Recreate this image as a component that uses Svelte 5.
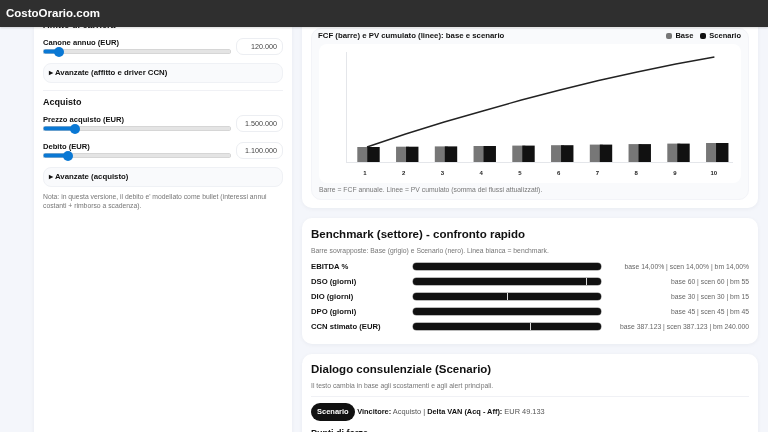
<script>
	let leftSliders = [{ label: 'Canone annuo (EUR)', pct: 6.4, value: '120.000' }];
	let buySliders = [
		{ label: 'Prezzo acquisto (EUR)', pct: 15.4, value: '1.500.000' },
		{ label: 'Debito (EUR)', pct: 11.5, value: '1.100.000' }
	];

	let base = [15, 15.3, 15.6, 16, 16.4, 16.8, 17.4, 17.9, 18.4, 19];
	let pv = [103, 90, 78, 67, 56, 46, 36.5, 28, 20, 13];

	const slot = 38.75;
	$: linePoints = pv.map((y, i) => `${48 + i * 38.6},${y}`).join(' ');

	let benchmark = [
		{ label: 'EBITDA %', mark: null, text: 'base 14,00% | scen 14,00% | bm 14,00%' },
		{ label: 'DSO (giorni)', mark: 92, text: 'base 60 | scen 60 | bm 55' },
		{ label: 'DIO (giorni)', mark: 50, text: 'base 30 | scen 30 | bm 15' },
		{ label: 'DPO (giorni)', mark: null, text: 'base 45 | scen 45 | bm 45' },
		{ label: 'CCN stimato (EUR)', mark: 62, text: 'base 387.123 | scen 387.123 | bm 240.000' }
	];

	function fill(pct) {
		return `background-size:${4 + pct * 1.72}px 100%`;
	}
</script>

<div class="page">
	<header class="topbar">CostoOrario.com</header>

	<div class="layout">
		<aside class="card side">
			<h3 class="cutTitle">Affitto di carriera</h3>
			{#each leftSliders as s}
				<div class="field">
					<div class="fieldMain">
						<label>{s.label}</label>
						<input type="range" min="0" max="100" step="0.1" value={s.pct} style={fill(s.pct)} />
					</div>
					<input class="num" type="text" value={s.value} />
				</div>
			{/each}
			<details class="adv"><summary>Avanzate (affitto e driver CCN)</summary></details>
			<hr />
			<h3>Acquisto</h3>
			{#each buySliders as s}
				<div class="field">
					<div class="fieldMain">
						<label>{s.label}</label>
						<input type="range" min="0" max="100" step="0.1" value={s.pct} style={fill(s.pct)} />
					</div>
					<input class="num" type="text" value={s.value} />
				</div>
			{/each}
			<details class="adv"><summary>Avanzate (acquisto)</summary></details>
			<p class="note sideNote">Nota: in questa versione, il debito e' modellato come bullet (interessi annui costanti + rimborso a scadenza).</p>
		</aside>

		<main class="right">
			<section class="card chartCard">
				<div class="panel">
					<div class="panelHead">
						<strong>FCF (barre) e PV cumulato (linee): base e scenario</strong>
						<div class="legend">
							<span class="dot grey"></span>Base
							<span class="dot black"></span>Scenario
						</div>
					</div>
					<div class="chartBox">
						<svg width="423" height="139" viewBox="0 0 423 139">
							<line x1="27.5" y1="8" x2="27.5" y2="118" stroke="#e4e6ea" />
							<line x1="27" y1="118.5" x2="414" y2="118.5" stroke="#e4e6ea" />
							{#each base as h, i}
								<rect x={38.3 + i * slot} y={118 - h} width="13" height={h} fill="#777" />
								<rect x={48.3 + i * slot} y={118 - h} width="12.4" height={h} fill="#111" />
								<text x={46 + i * slot} y="131" text-anchor="middle">{i + 1}</text>
							{/each}
							<polyline points={linePoints} fill="none" stroke="#222" stroke-width="1.4" />
						</svg>
					</div>
					<p class="note chartNote">Barre = FCF annuale. Linee = PV cumulato (somma dei flussi attualizzati).</p>
				</div>
			</section>

			<section class="card benchCard">
				<h2>Benchmark (settore) - confronto rapido</h2>
				<p class="note sub">Barre sovrapposte: Base (grigio) e Scenario (nero). Linea bianca = benchmark.</p>
				<div class="rows">
					{#each benchmark as row}
						<div class="row">
							<span class="rowLabel">{row.label}</span>
							<div class="track">
								{#if row.mark !== null}
									<span class="mark" style="left:{row.mark}%"></span>
								{/if}
							</div>
							<span class="rowText">{row.text}</span>
						</div>
					{/each}
				</div>
			</section>

			<section class="card dialogCard">
				<h2>Dialogo consulenziale (Scenario)</h2>
				<p class="note sub">Il testo cambia in base agli scostamenti e agli alert principali.</p>
				<hr class="wide" />
				<div class="verdict">
					<span class="pill">Scenario</span>
					<span><b>Vincitore:</b> Acquisto | <b>Delta VAN (Acq - Aff):</b> EUR 49.133</span>
				</div>
				<h4>Punti di forza</h4>
			</section>
		</main>
	</div>
</div>

<style>
	:global(body) {
		margin: 0;
		background: #f4f6fb;
		font-family: "Liberation Sans", Arial, sans-serif;
		color: #111;
		overflow: hidden;
	}
	.page {
		height: 432px;
		overflow: hidden;
		position: relative;
		filter: blur(0.35px);
	}
	.topbar {
		position: absolute;
		left: 0;
		top: 0;
		right: 0;
		height: 27px;
		background: #2f2f2f;
		color: #fff;
		font-size: 11.5px;
		font-weight: bold;
		line-height: 27px;
		padding-left: 6px;
		box-shadow: 0 1px 2px rgba(0, 0, 0, 0.15);
		z-index: 5;
	}
	.layout {
		display: grid;
		grid-template-columns: 258px 456px;
		gap: 10px;
		margin: -40px 0 0 34px;
	}
	.card {
		background: #fff;
		border-radius: 10px;
		padding: 9px;
		box-shadow: 0 1px 4px rgba(20, 30, 60, 0.05);
	}
	.side {
		height: 600px;
		padding: 60px 9px 0;
	}
	h3 {
		font-size: 9px;
		margin: 6px 0 7px;
		line-height: 11px;
	}
	.cutTitle {
		margin: 0 0 7px;
	}
	.field {
		display: flex;
		gap: 5px;
		align-items: flex-end;
		margin-bottom: 8px;
	}
	.field + .field {
		margin-top: 10px;
	}
	.fieldMain {
		flex: 1;
		min-width: 0;
	}
	label {
		display: block;
		font-size: 7.6px;
		font-weight: bold;
		line-height: 9px;
	}
	input[type="range"] {
		display: block;
		width: 100%;
		height: 5px;
		margin: 2px 0 1px;
		appearance: none;
		-webkit-appearance: none;
		border-radius: 3px;
		background-color: #e4e4e4;
		background-image: linear-gradient(#0a78d4, #0a78d4);
		background-repeat: no-repeat;
		box-shadow: inset 0 0 0 0.5px #c8c8c8;
	}
	input[type="range"]::-webkit-slider-thumb {
		-webkit-appearance: none;
		width: 10px;
		height: 10px;
		border-radius: 50%;
		background: #0a78d4;
	}
	.num {
		width: 47px;
		height: 17px;
		box-sizing: border-box;
		border: 1px solid #eceef2;
		border-radius: 7px;
		text-align: right;
		font: 7.2px "Liberation Sans", Arial, sans-serif;
		color: #444;
		padding: 0 5px;
		background: #fff;
	}
	.adv {
		background: #f9fafc;
		border: 1px solid #eff1f5;
		border-radius: 8px;
		height: 20px;
		box-sizing: border-box;
		padding: 0 5px;
		font-size: 7.8px;
		font-weight: bold;
		line-height: 18px;
	}
	summary {
		list-style: none;
	}
	summary::before {
		content: "▸";
		margin-right: 2px;
		font-size: 8px;
	}
	hr {
		border: 0;
		border-top: 1px solid #f0f1f5;
		margin: 7px 0 0;
	}
	.note {
		font-size: 6.8px;
		line-height: 9px;
		color: #777;
		margin: 6px 0 0;
	}
	.sideNote {
		margin-top: 5px;
	}
	.right {
		display: flex;
		flex-direction: column;
		gap: 10px;
	}
	.chartCard {
		padding-top: 68px;
		padding-bottom: 8px;
	}
	.benchCard {
		padding-bottom: 10px;
	}
	.dialogCard {
		padding-top: 8px;
	}
	.panel {
		background: #f9fafc;
		border: 1px solid #f3f4f8;
		border-radius: 10px;
		padding: 0 7px 5px;
	}
	.panelHead {
		display: flex;
		justify-content: space-between;
		align-items: center;
		box-sizing: border-box;
		height: 15px;
		padding-bottom: 2px;
		font-size: 7.5px;
	}
	.panelHead strong {
		font-size: 7.8px;
		margin-left: -1px;
	}
	.legend {
		display: flex;
		align-items: center;
		font-weight: bold;
	}
	.dot {
		width: 6px;
		height: 6px;
		border-radius: 2px;
		margin: 0 3px 0 7px;
	}
	.grey {
		background: #777;
	}
	.black {
		background: #111;
	}
	.chartBox {
		background: #fff;
		border-radius: 8px;
		height: 139px;
	}
	svg {
		display: block;
	}
	svg text {
		font-size: 6px;
		font-weight: bold;
		fill: #222;
	}
	.chartNote {
		margin-top: 2px;
	}
	h2 {
		font-size: 11.5px;
		line-height: 14px;
		margin: 0;
	}
	.sub {
		margin-top: 5px;
	}
	.rows {
		margin-top: 3.5px;
	}
	.row {
		display: grid;
		grid-template-columns: 102px 188px 1fr;
		align-items: center;
		height: 15.1px;
		font-size: 7.7px;
	}
	.rowLabel {
		font-weight: bold;
	}
	.track {
		position: relative;
		height: 7px;
		background: #111;
		border-radius: 4px;
		box-shadow: 0 0 0 0.5px #777;
	}
	.mark {
		position: absolute;
		top: 0;
		bottom: 0;
		width: 1px;
		background: #ddd;
	}
	.rowText {
		text-align: right;
		color: #666;
		font-size: 6.8px;
	}
	.wide {
		margin: 6px 0 6px;
	}
	.verdict {
		display: flex;
		align-items: center;
		gap: 2.5px;
		font-size: 7.4px;
		color: #555;
	}
	.verdict b {
		color: #111;
	}
	.pill {
		background: #111;
		color: #fff;
		font-weight: bold;
		font-size: 7.5px;
		border-radius: 9px;
		height: 18px;
		line-height: 18px;
		padding: 0 6px;
	}
	h4 {
		font-size: 9px;
		margin: 7px 0 0;
	}
</style>
